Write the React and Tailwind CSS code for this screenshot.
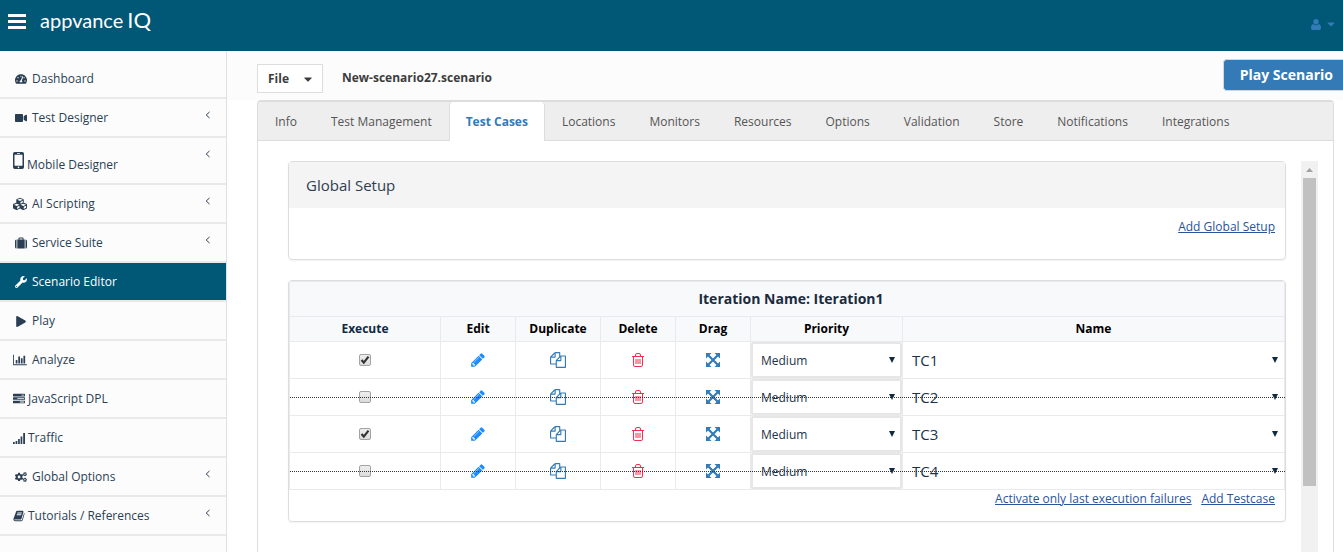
import React from "react";
import {
  FaTachometerAlt,
  FaVideo,
  FaCubes,
  FaWrench,
  FaPlay,
  FaCogs,
  FaCaretDown,
} from "react-icons/fa";

const Glyph = ({ box = 1792, d, className }) => (
  <svg viewBox={`0 0 ${box} 1792`} className={className} fill="currentColor" aria-hidden="true">
    <path d={d} />
  </svg>
);

const CHART =
  "M640 896v512h-256v-512h256zm384-512v1024h-256v-1024h256zm1024 1152v128h-2048v-1536h128v1408h1920zm-640-896v768h-256v-768h256zm384-384v1152h-256v-1152h256z";
const TASKS =
  "M1024 1408h640v-128h-640v128zm-384-512h1024v-128h-1024v128zm640-512h384v-128h-384v128zm512 832v256q0 26-19 45t-45 19h-1664q-26 0-45-19t-19-45v-256q0-26 19-45t45-19h1664q26 0 45 19t19 45zm0-512v256q0 26-19 45t-45 19h-1664q-26 0-45-19t-19-45v-256q0-26 19-45t45-19h1664q26 0 45 19t19 45zm0-512v256q0 26-19 45t-45 19h-1664q-26 0-45-19t-19-45v-256q0-26 19-45t45-19h1664q26 0 45 19t19 45z";
const BOOK =
  "M1703 478q40 57 18 129l-275 906q-19 64-76.5 107.5t-122.500 43.500h-923q-77 0-148.500-53.500t-99.500-131.500q-24-67-2-127 0-4 3-27t4-37q1-8-3-21.500t-3-19.500q2-11 8-21t16.500-23.500 16.500-23.500q23-38 45-91.500t30-91.500q3-10 .5-30t-.5-28q3-11 17-28t17-23q21-36 42-92t25-90q1-9-2.500-32t.5-28q4-13 22-30.500t22-22.500q19-26 42.500-84.500t27.500-96.500q1-8-3-25.500t-2-26.500q2-8 9-18t18-23 17-21q8-12 16.500-30.500t15-35 16-36 19.500-32 26.500-23.500 36-11.500 47.500 5.500l-1 3q38-9 51-9h761q74 0 114 56t18 130l-274 906q-36 119-71.500 153.500t-128.500 34.500h-869q-27 0-38 15-11 16-1 43 24 70 144 70h923q29 0 56-15.500t35-41.500l300-987q7-22 5-57 38 15 59 43zm-1064 2q-4 13 2 22.500t20 9.500h608q13 0 25.500-9.500t16.500-22.500l21-64q4-13-2-22.500t-20-9.500h-608q-13 0-25.500 9.500t-16.500 22.500zm-83 256q-4 13 2 22.500t20 9.500h608q13 0 25.500-9.500t16.500-22.500l21-64q4-13-2-22.500t-20-9.500h-608q-13 0-25.500 9.500t-16.500 22.500z";
const PENCIL =
  "M491 1536l91-91-235-235-91 91v107h128v128h107zm523-928q0-22-22-22-10 0-17 7l-542 542q-7 7-7 17 0 22 22 22 10 0 17-7l542-542q7-7 7-17zm-54-192l416 416-832 832h-416v-416zm683 96q0 53-37 90l-166 166-416-416 166-165q36-38 90-38 53 0 91 38l235 234q37 39 37 91z";
const FILES =
  "M1696 384q40 0 68 28t28 68v1216q0 40-28 68t-68 28h-960q-40 0-68-28t-28-68v-288h-544q-40 0-68-28t-28-68v-672q0-40 20-88t48-76l408-408q28-28 76-48t88-20h416q40 0 68 28t28 68v328q68-40 128-40h416zm-544 213l-299 299h299v-299zm-640-384l-299 299h299v-299zm196 647l316-316v-416h-384v416q0 40-28 68t-68 28h-416v640h512v-256q0-40 20-88t48-76zm956 804v-1152h-384v416q0 40-28 68t-68 28h-416v640h896z";

const SignalIcon = () => (
  <svg viewBox="0 0 12 12" className="h-3 w-3" fill="currentColor" aria-hidden="true">
    <path d="M0 10h1.700v2H0zM2.600 9h1.700v3H2.600zM5.100 7h1.700v5H5.100zM7.600 4.500h1.700V12H7.600zM10.200 1h1.800v11h-1.800z" />
  </svg>
);

const SuitcaseIcon = () => (
  <svg viewBox="0 0 12 12" className="h-3 w-3" fill="currentColor" aria-hidden="true">
    <path d="M0 4q0-1.500 1.500-1.500V11.500Q0 11.500 0 10zM2.300 2.500H3.500V1.300Q3.500.5 4.300.5h3.400q.8 0 .8.800V2.500h1.200v9H2.300zM4.500 1.500v1h3v-1zM10.500 2.500Q12 2.500 12 4v6q0 1.500-1.500 1.500z" />
  </svg>
);

const MobileIcon = () => (
  <svg viewBox="0 0 11 17" className="h-[17px] w-[11px]" fill="currentColor" aria-hidden="true">
    <path
      fillRule="evenodd"
      d="M1.800 0h7.400A1.800 1.800 0 0 1 11 1.800v13.400A1.800 1.800 0 0 1 9.200 17H1.800A1.800 1.800 0 0 1 0 15.200V1.800A1.800 1.800 0 0 1 1.800 0zM1.500 2.800v11h8v-11zM4 1v.8h3V1zM5.500 14.600a.8.8 0 1 0 0 1.600.8.800 0 0 0 0-1.600z"
    />
  </svg>
);

const UserIcon = () => (
  <svg viewBox="0 0 10 11" className="h-[11px] w-2.5" fill="currentColor" aria-hidden="true">
    <circle cx="5" cy="2.800" r="2.700" />
    <path d="M2.300 4.900Q3.500 6.200 5 6.200T7.700 4.900Q10 5.300 10 9.200 10 11 8.500 11h-7Q0 11 0 9.200 0 5.300 2.300 4.900z" />
  </svg>
);

const TrashIcon = () => (
  <svg viewBox="0 0 12 14" className="h-[14px] w-3" fill="none" stroke="currentColor" aria-hidden="true">
    <path d="M0 3.500h12M1.500 3.500v8.500q0 1.500 1.500 1.500h6q1.500 0 1.500-1.500V3.500M3.500 3.500V2q0-1.500 1.500-1.500h2q1.500 0 1.500 1.500v1.500M4 6v5M6 6v5M8 6v5" />
  </svg>
);

const DragIcon = () => (
  <svg viewBox="0 0 14 14" className="h-[14px] w-[14px]" fill="currentColor" aria-hidden="true">
    <path d="M2.500 2.500l9 9M11.500 2.500l-9 9" stroke="currentColor" strokeWidth="2.200" />
    <path d="M0 0h5.500L0 5.500zM14 0v5.500L8.500 0zM0 14V8.500L5.500 14zM14 14H8.500L14 8.500z" />
  </svg>
);

const Arrow = ({ className }) => (
  <svg viewBox="0 0 6 6" className={`pointer-events-none absolute h-1.5 w-1.5 ${className}`} fill="#0f2a43" aria-hidden="true">
    <path d="M0 0h6L3 6z" />
  </svg>
);

const NAV = [
  { label: "Dashboard", icon: <FaTachometerAlt className="h-3 w-3" />, pad: "pl-[15px] gap-[5px]" },
  { label: "Test Designer", icon: <FaVideo className="h-[14px] w-3" />, pad: "pl-[15px] gap-[5px]", sub: true },
  { label: "Mobile Designer", icon: <MobileIcon />, pad: "pl-[13px] gap-[3px]", sub: true, tall: true },
  { label: "AI Scripting", icon: <FaCubes className="h-[14px] w-[14px]" />, pad: "pl-[13px] gap-[5px]", sub: true },
  { label: "Service Suite", icon: <SuitcaseIcon />, pad: "pl-[15px] gap-[5px]", sub: true },
  { label: "Scenario Editor", icon: <FaWrench className="h-3 w-3" />, pad: "pl-[15px] gap-[5px]", active: true },
  { label: "Play", icon: <FaPlay className="h-[11px] w-3" />, pad: "pl-[15px] gap-[5px]" },
  { label: "Analyze", icon: <Glyph box={2048} d={CHART} className="h-3 w-[14px]" />, pad: "pl-[13px] gap-[5px]" },
  { label: "JavaScript DPL", icon: <Glyph d={TASKS} className="h-3 w-3" />, pad: "pl-[13px] gap-[3px]" },
  { label: "Traffic", icon: <SignalIcon />, pad: "pl-[13px] gap-[3px]" },
  { label: "Global Options", icon: <FaCogs className="h-[14px] w-3" />, pad: "pl-[15px] gap-[5px]", sub: true },
  { label: "Tutorials / References", icon: <Glyph d={BOOK} className="h-3 w-3" />, pad: "pl-[13px] gap-[3px]", sub: true },
];

const TABS = [
  "Info",
  "Test Management",
  "Test Cases",
  "Locations",
  "Monitors",
  "Resources",
  "Options",
  "Validation",
  "Store",
  "Notifications",
  "Integrations",
];

const COLUMNS = [
  ["Execute", "w-[151px]", "text-[#0f2a43]"],
  ["Edit", "w-[75px]", ""],
  ["Duplicate", "w-[85px]", ""],
  ["Delete", "w-[75px]", ""],
  ["Drag", "w-[75px]", ""],
  ["Priority", "w-[152px]", ""],
  ["Name", "", ""],
];

const CASES = [
  { name: "TC1", on: true },
  { name: "TC2", on: false },
  { name: "TC3", on: true },
  { name: "TC4", on: false },
];

function Header() {
  return (
    <header className="flex h-[51px] shrink-0 items-start justify-between bg-[#005776] px-2">
      <div className="flex items-start gap-[14px]">
        <button aria-label="Toggle menu" className="mt-[14px]">
          <svg viewBox="0 0 18 15" className="h-[15px] w-[18px]" fill="#fff" aria-hidden="true">
            <path d="M0 0h18v3H0zM0 6h18v3H0zM0 12h18v3H0z" />
          </svg>
        </button>
        <a href="#home" className="flex items-baseline gap-1 pt-1 font-['Lato',sans-serif] leading-8 text-white">
          <span className="text-[20px]">appvance</span>
          <span className="text-[22px]">IQ</span>
        </a>
      </div>
      <button aria-label="Account" className="mt-[18px] flex items-center gap-1.5 text-[#337ab7]">
        <UserIcon />
        <FaCaretDown className="h-3 w-2" />
      </button>
    </header>
  );
}

function Sidebar() {
  return (
    <nav className="w-[227px] shrink-0 border-r border-[#e0e0e0] bg-[#fcfcfc] pt-[9px]">
      <ul>
        {NAV.map((n) => (
          <li key={n.label} className="border-b-2 border-[#e9e9e9]">
            <a
              href="#nav"
              className={`relative flex ${n.pad} ${n.tall ? "h-[45px] pt-2" : "h-[37px]"} items-center ${
                n.active ? "bg-[#005776] text-white" : "text-[#2a3f54]"
              }`}
            >
              <span className={n.tall ? "pb-2" : "pt-px"}>{n.icon}</span>
              <span>{n.label}</span>
              {n.sub && (
                <svg
                  viewBox="0 0 5 8"
                  className="absolute right-4 top-3 h-2 w-[5px]"
                  fill="none"
                  stroke="currentColor"
                  aria-hidden="true"
                >
                  <path d="M4.500 1L1.200 4l3.300 3" />
                </svg>
              )}
            </a>
          </li>
        ))}
      </ul>
    </nav>
  );
}

function CaseRow({ name, on }) {
  const cell = "border border-[#e9e9ee] p-0";
  const action = "mx-auto block";
  return (
    <tr className="relative h-[37px]">
      <td className={cell}>
        <label className="relative mx-auto block h-3 w-3">
          <input
            type="checkbox"
            defaultChecked={on}
            aria-label={`Execute ${name}`}
            className="peer block h-3 w-3 appearance-none rounded-xs border border-[#a3a3a3] bg-linear-to-b from-[#eee] to-[#dcdcdc]"
          />
          <svg
            viewBox="0 0 12 12"
            className="pointer-events-none absolute inset-0 hidden h-3 w-3 peer-checked:block"
            fill="none"
            stroke="#333"
            strokeWidth="2.2"
            aria-hidden="true"
          >
            <path d="M2.500 6l2.300 2.600L9.500 2.600" />
          </svg>
        </label>
        {!on && (
          <span className="pointer-events-none absolute inset-x-0 top-1/2 z-10 border-t border-dotted border-[#333]" />
        )}
      </td>
      <td className={cell}>
        <button aria-label={`Edit ${name}`} className={`${action} text-[#1a8cff]`}>
          <Glyph d={PENCIL} className="h-4 w-4" />
        </button>
      </td>
      <td className={cell}>
        <button aria-label={`Duplicate ${name}`} className={`${action} text-[#337ab7]`}>
          <Glyph d={FILES} className="h-4 w-4" />
        </button>
      </td>
      <td className={cell}>
        <button aria-label={`Delete ${name}`} className={`${action} text-[#f0304f]`}>
          <TrashIcon />
        </button>
      </td>
      <td className={cell}>
        <button aria-label={`Drag ${name}`} className={`${action} text-[#337ab7]`}>
          <DragIcon />
        </button>
      </td>
      <td className={cell}>
        <div className="relative">
          <select
            aria-label={`Priority of ${name}`}
            className="block h-9 w-full appearance-none rounded-xs border-2 border-[#e6e6e6] bg-white pl-2 pt-0.5 text-xs text-[#1b3349]"
          >
            <option>Medium</option>
            <option>High</option>
            <option>Low</option>
          </select>
          <Arrow className="right-[7px] top-[15px]" />
        </div>
      </td>
      <td className={cell}>
        <div className="relative">
          <select
            aria-label="Test case name"
            className="block h-9 w-full appearance-none bg-white pl-[9px] text-[15px] text-[#1b3349]"
          >
            <option>{name}</option>
          </select>
          <Arrow className="right-1.5 top-[15px]" />
        </div>
      </td>
    </tr>
  );
}

export default function App() {
  return (
    <div className="flex min-h-screen flex-col overflow-hidden bg-white font-['Open_Sans',sans-serif] text-xs leading-5">
      <Header />
      <div className="flex grow">
        <Sidebar />
        <main className="flex min-w-0 grow flex-col">
          <div className="flex h-[49px] items-start bg-[#fcfcfc] pl-[30px] font-bold text-[#3d3d3d]">
            <button className="mt-[13px] flex h-[29px] w-[66px] items-center justify-between border border-[#ddd] bg-white px-2.5">
              File
              <FaCaretDown className="h-[14px] w-2" />
            </button>
            <h1 className="ml-[19px] mt-[17px]">New-scenario27.scenario</h1>
            <button className="ml-auto mt-2 h-[32px] rounded-l border-y border-l border-[#cfd8e0] bg-[#337ab7] pl-4 pr-2.5 text-sm font-bold text-white">
              Play Scenario
            </button>
          </div>

          <section className="ml-[30px] mr-[9px] flex grow flex-col rounded-t border-x border-t-2 border-[#ddd]">
            <div role="tablist" className="flex h-[39px] border-b border-[#ddd] bg-[#eee]">
              {TABS.map((t) => (
                <button
                  key={t}
                  role="tab"
                  aria-selected={t === "Test Cases"}
                  className={
                    t === "Test Cases"
                      ? "-mb-px rounded-t border-x border-[#ddd] bg-white px-4 font-bold text-[#337ab7]"
                      : "border-x border-transparent px-4 pt-0.5 text-[#555]"
                  }
                >
                  {t}
                </button>
              ))}
            </div>

            <div className="flex grow pl-[30px] pr-[15px] pt-5">
              <div className="mr-[15px] min-w-0 grow">
                <div className="rounded border border-[#ddd] shadow-xs">
                  <h2 className="h-[46px] bg-[#f4f4f4] pl-[17px] pt-[13px] text-[15px] text-[#2d3e50]">
                    Global Setup
                  </h2>
                  <div className="flex h-[51px] justify-end pr-2.5 pt-[9px]">
                    <a href="#setup" className="text-[#2a5298] underline">
                      Add Global Setup
                    </a>
                  </div>
                </div>

                <div className="mt-5 rounded border border-[#ddd] shadow-xs">
                  <table className="w-full table-fixed border-collapse">
                    <colgroup>
                      {COLUMNS.map(([label, width]) => (
                        <col key={label} className={width} />
                      ))}
                    </colgroup>
                    <thead className="bg-[#f8f9fb] text-black">
                      <tr className="h-[35px]">
                        <th colSpan={7} className="border border-[#e9e9ee] p-0 pl-2 text-sm font-bold text-[#1b2b3d]">
                          Iteration Name: Iteration1
                        </th>
                      </tr>
                      <tr className="h-[25px]">
                        {COLUMNS.map(([label, , tone]) => (
                          <th key={label} className={`border border-[#e9e9ee] p-0 font-bold ${tone}`}>
                            {label}
                          </th>
                        ))}
                      </tr>
                    </thead>
                    <tbody>
                      {CASES.map((c) => (
                        <CaseRow key={c.name} {...c} />
                      ))}
                    </tbody>
                  </table>
                  <div className="flex h-[31px] justify-end gap-2.5 pr-2.5 leading-[18px] text-[#2a5298] underline">
                    <a href="#failures">Activate only last execution failures</a>
                    <a href="#add">Add Testcase</a>
                  </div>
                </div>
              </div>

              <div className="w-[17px] shrink-0 bg-[#f1f1f1] px-0.5" aria-hidden="true">
                <svg viewBox="0 0 13 17" className="block h-[17px] w-[13px]" fill="#a3a3a3">
                  <path d="M3 11l3.500-4 3.500 4z" />
                </svg>
                <div className="h-[308px] bg-[#c1c1c1]" />
              </div>
            </div>
          </section>
        </main>
      </div>
    </div>
  );
}
